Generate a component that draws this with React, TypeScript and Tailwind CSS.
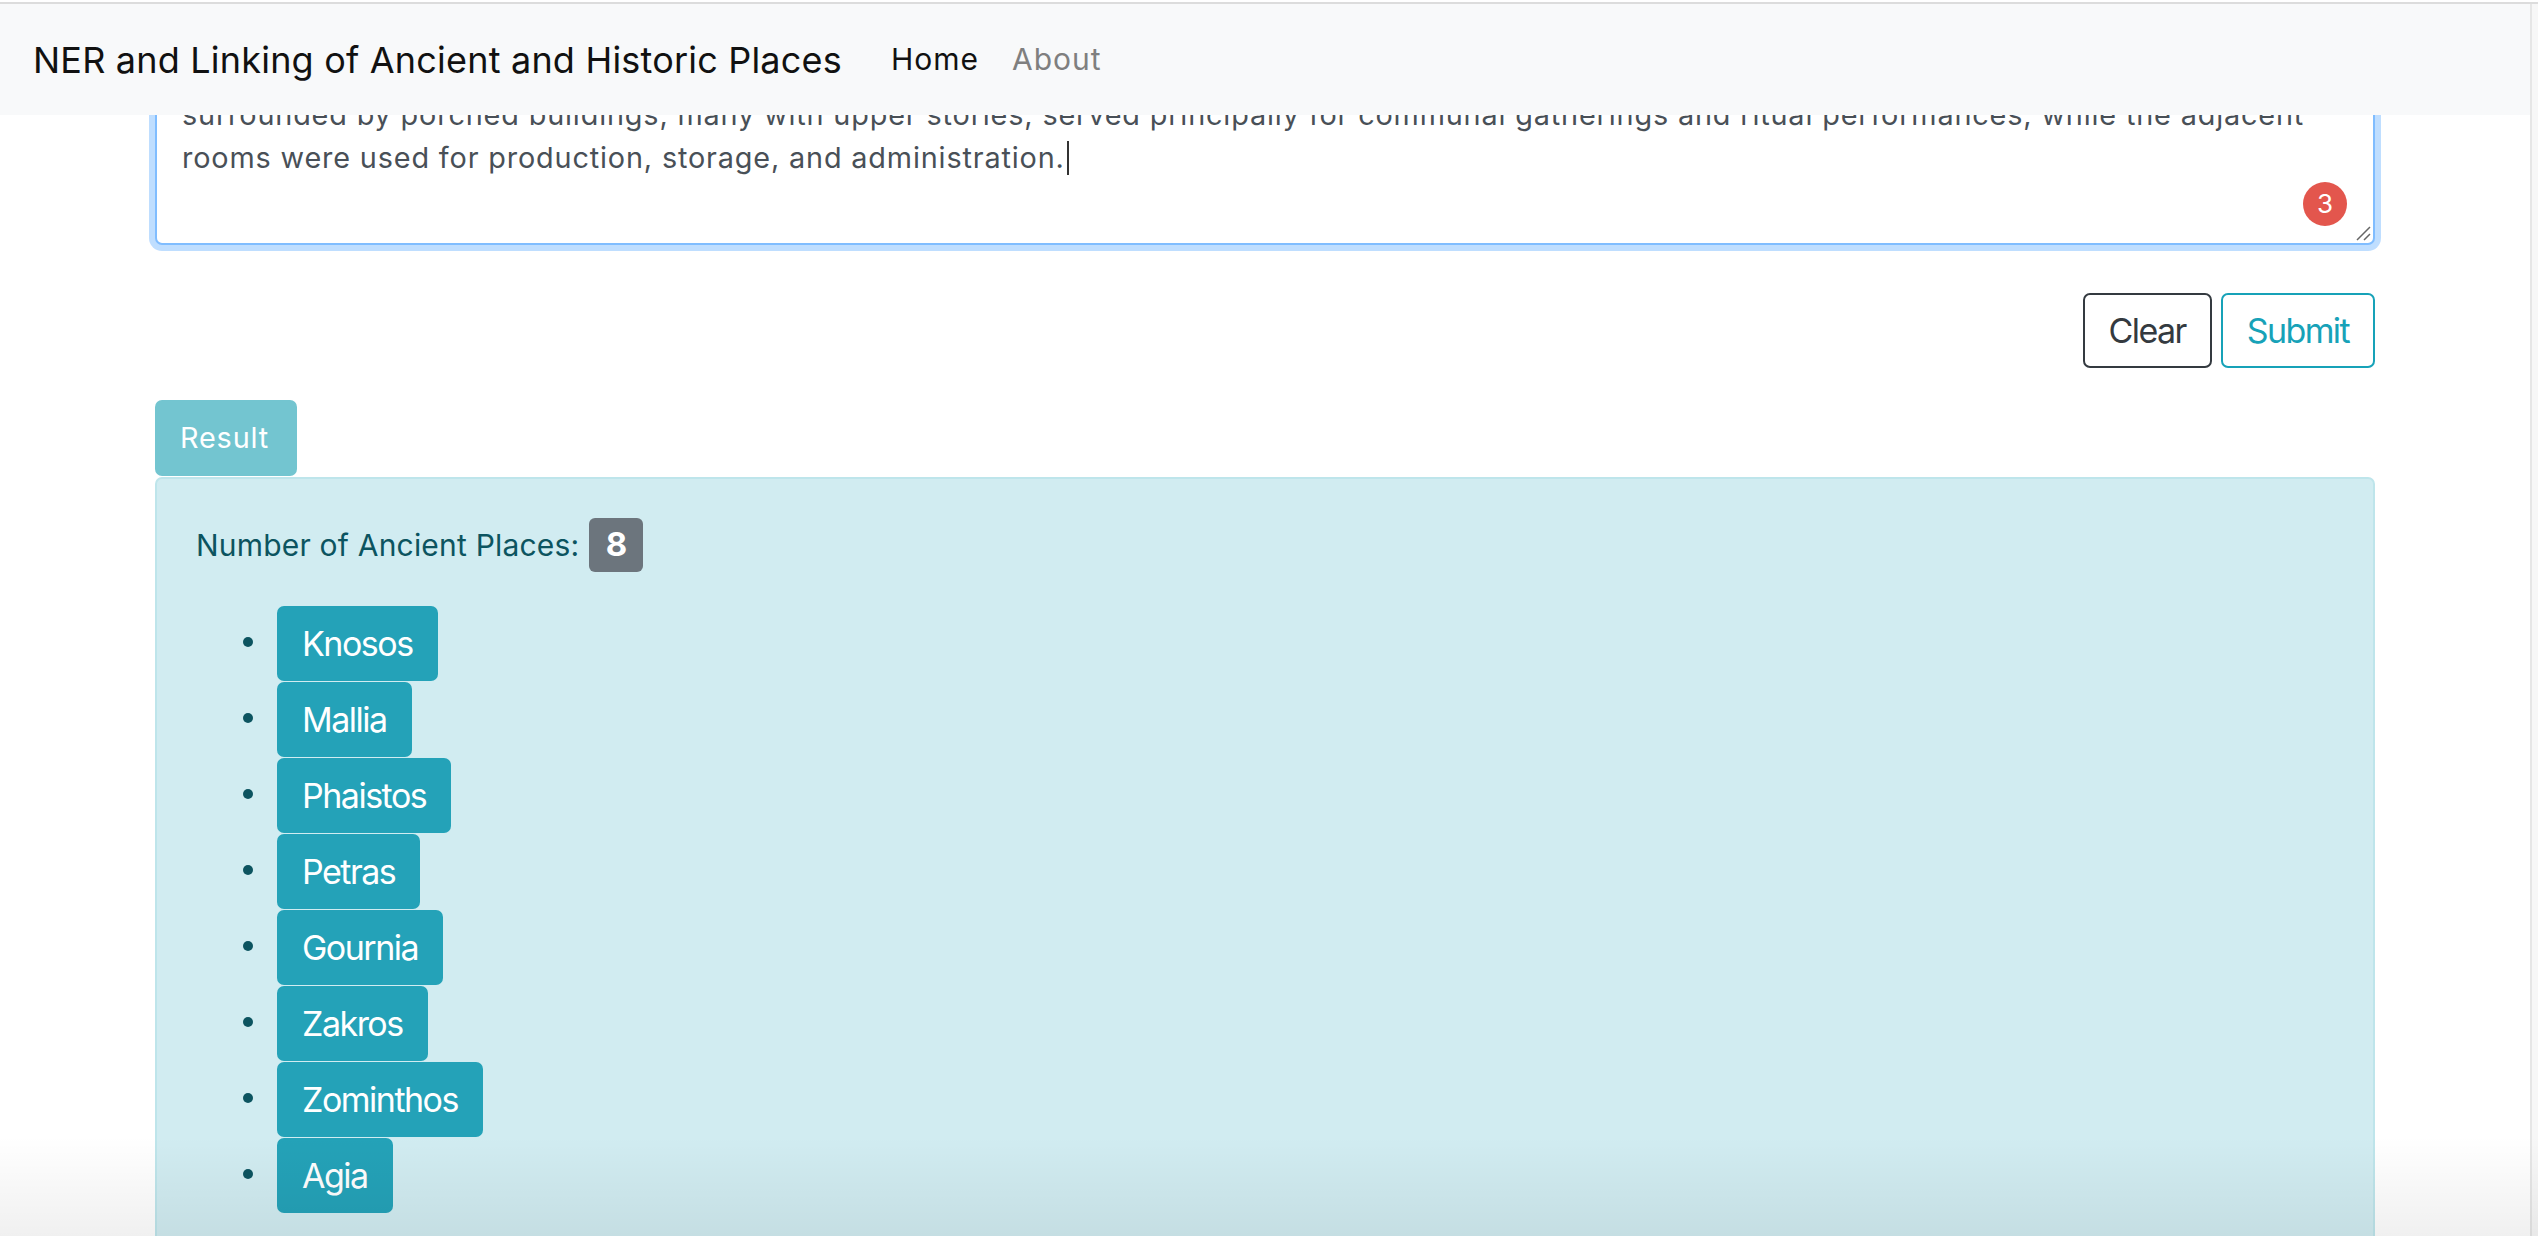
import React from "react";

const places = ["Knosos", "Mallia", "Phaistos", "Petras", "Gournia", "Zakros", "Zominthos", "Agia"];

function Navbar() {
  return (
    <nav className="absolute inset-x-0 top-0 z-20 flex h-[111px] items-center bg-[#f8f9fa] pl-[33px]">
      <span className="text-[36px] tracking-[0.2px] text-[#111]">NER and Linking of Ancient and Historic Places</span>
      <div className="ml-[49px] flex items-center gap-[33px] text-[30px] tracking-[1px]">
        <span className="text-[#111]">Home</span>
        <span className="text-[#7f7f7f]">About</span>
      </div>
    </nav>
  );
}

function InputBox() {
  return (
    <div className="relative h-[197px] rounded-[7px] border-2 border-[#80bdff] bg-white pl-[25px] pt-[43px] text-[28.8px] leading-[43.2px] tracking-[0.85px] text-[#495057] shadow-[0_0_0_6px_rgba(0,123,255,0.25)]">
      <div className="whitespace-nowrap">
        surrounded by porched buildings, many with upper stories, served principally for communal gatherings and ritual performances, while the adjacent
      </div>
      <div className="whitespace-nowrap">
        rooms were used for production, storage, and administration.
        <span className="ml-[2px] inline-block h-[34px] w-[2px] bg-[#333] align-[-7px]" />
      </div>
      <span className="absolute bottom-[17px] right-[26px] flex h-[44px] w-[44px] items-center justify-center rounded-full bg-[#e3564d] text-[26px] tracking-normal text-white">
        3
      </span>
      <svg className="absolute bottom-[2px] right-[2px]" width="16" height="16" viewBox="0 0 16 16">
        <path d="M2 15 L15 2 M9 15 L15 9" stroke="#666" strokeWidth="1.5" />
      </svg>
    </div>
  );
}

export default function App() {
  return (
    <div className="relative flex h-[1236px] w-full flex-col overflow-hidden bg-white font-['Inter',sans-serif]">
      <div className="h-[2px] shrink-0 bg-white" />
      <div className="h-[2px] shrink-0 bg-[#dcdcdc]" />
      <div className="flex min-h-0 flex-1 overflow-hidden">
        <main className="relative flex-1">
          <Navbar />
          <div className="px-[155px] pt-[44px]">
            <InputBox />

            <div className="mt-[48px] flex justify-end gap-[9px]">
              <button className="h-[75px] rounded-[7px] border-2 border-[#343a40] px-[24px] text-[34px] tracking-[-1.6px] text-[#343a40]">
                Clear
              </button>
              <button className="h-[75px] rounded-[7px] border-2 border-[#17a2b8] px-[24px] text-[34px] tracking-[-1.6px] text-[#17a2b8]">
                Submit
              </button>
            </div>

            <div className="mt-[32px] flex h-[76px] w-[142px] items-center rounded-[7px] bg-[#73c5d0] pl-[25px] text-[28.8px] tracking-[0.85px] text-white">
              Result
            </div>

            <div className="mt-[1px] h-[800px] rounded-t-[7px] border-2 border-[#bee5eb] bg-[#d1ecf1] pl-[39px] pt-[39px] text-[#0c5460]">
              <div className="flex items-center gap-[10px]">
                <span className="text-[30px] tracking-[0.2px]">Number of Ancient Places:</span>
                <span className="flex h-[54px] w-[54px] items-center justify-center rounded-[6px] bg-[#6c757d] text-[33px] font-bold text-white">
                  8
                </span>
              </div>
              <ul className="mt-[34px] flex flex-col gap-[1px]">
                {places.map((p) => (
                  <li key={p} className="flex items-center pl-[47px]">
                    <span className="mr-[24px] h-[10px] w-[10px] -translate-y-[2px] rounded-full bg-[#0c5460]" />
                    <span className="flex h-[75px] items-center rounded-[7px] bg-[#24a2b8] px-[25px] text-[34px] tracking-[-1.5px] text-white">
                      {p}
                    </span>
                  </li>
                ))}
              </ul>
            </div>
          </div>
        </main>
        <div className="w-[8px] shrink-0 border-l-2 border-[#e6e6e6] bg-[#f7f7f7]" />
      </div>
      <div className="pointer-events-none absolute inset-x-0 bottom-0 z-30 h-[100px] bg-linear-to-b from-transparent to-[rgba(0,0,0,0.06)]" />
    </div>
  );
}
